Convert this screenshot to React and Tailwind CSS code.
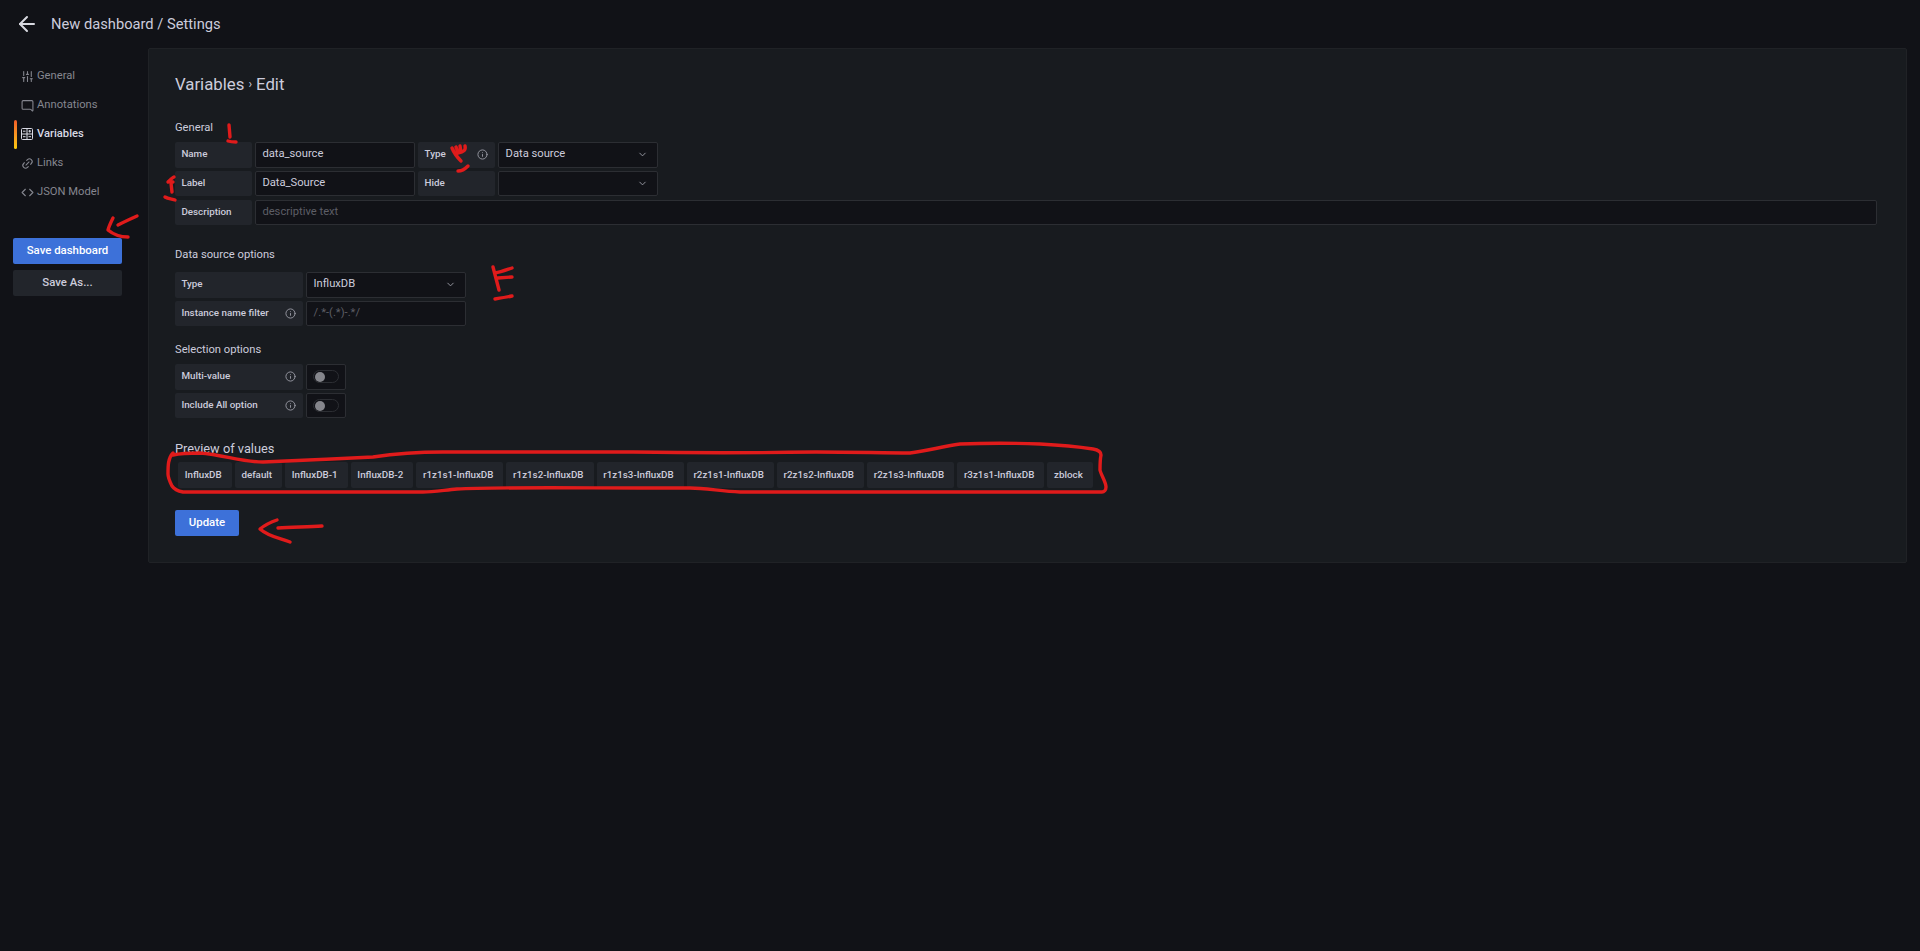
import React from "react";
import {
  ArrowLeft,
  ChevronDown,
  Code,
  Info,
  Link2,
  MessageSquare,
  SlidersVertical,
} from "lucide-react";

const CalcIcon = () => (
  <svg width="12" height="12" viewBox="0 0 12 12" fill="none" stroke="currentColor" strokeWidth="1">
    <rect x="0.5" y="0.5" width="11" height="11" rx="1" />
    <path d="M6 0.5v11M0.5 6h11M2 3.2h2.5M7.5 3.2H10M2 8.7h2.5M7.5 8.7H10M8.7 2v2.5" />
  </svg>
);

const navItems = [
  { label: "General", icon: <SlidersVertical size={13} /> },
  { label: "Annotations", icon: <MessageSquare size={13} className="-scale-x-100" /> },
  { label: "Variables", icon: <CalcIcon />, active: true },
  { label: "Links", icon: <Link2 size={13} className="-rotate-45" /> },
  { label: "JSON Model", icon: <Code size={13} /> },
];

const previewValues = [
  "InfluxDB",
  "default",
  "InfluxDB-1",
  "InfluxDB-2",
  "r1z1s1-InfluxDB",
  "r1z1s2-InfluxDB",
  "r1z1s3-InfluxDB",
  "r2z1s1-InfluxDB",
  "r2z1s2-InfluxDB",
  "r2z1s3-InfluxDB",
  "r3z1s1-InfluxDB",
  "zblock",
];

const FieldLabel = ({ width, info, children }) => (
  <div
    className={`${width} h-full shrink-0 flex items-center justify-between px-[6.4px] rounded-[2px] bg-[#22252b] text-[9.8px] font-medium text-[#ccccdc]`}
  >
    <span>{children}</span>
    {info && <Info size={11} className="mr-[1px] text-[#9b9ca6]" />}
  </div>
);

const Box = ({ width, select, muted, children }) => (
  <div
    className={`${width} h-full flex items-center justify-between px-[6.4px] rounded-[2px] border border-[#2c2e33] bg-[#111217] text-[11.2px] ${
      muted ? "text-[#5d5e66]" : "text-[#ccccdc]"
    }`}
  >
    <span>{children}</span>
    {select && <ChevronDown size={11} className="mr-[3px] text-[#9b9ca6]" />}
  </div>
);

const Toggle = () => (
  <div className="w-[40px] h-full flex items-center justify-center rounded-[2px] border border-[#2c2e33] bg-[#111217]">
    <div className="w-[26px] h-[13px] flex items-center rounded-full border border-[#2c2e33] px-[1px]">
      <div className="w-[10px] h-[10px] rounded-full bg-[#85868c]" />
    </div>
  </div>
);

const Row = ({ children }) => (
  <div className="h-[25.6px] flex gap-[3.2px] mb-[3.2px]">{children}</div>
);

// red marker scribbles drawn on top of the screenshot
const Annotations = () => (
  <svg
    className="absolute top-0 left-0 pointer-events-none"
    width="1920"
    height="951"
    fill="none"
    stroke="#e01b1b"
    strokeWidth="3.4"
    strokeLinecap="round"
    strokeLinejoin="round"
  >
    <path d="M229 125l1 12M228 141c3 1 5 1 8 1" />
    <path d="M168 182c2-2 4-4 6-5M171 179c-1 2 0 3 2 3M171 183l1 9M165 197c3 2 7 2 10 3" />
    <path d="M452 148c2 5 5 9 9 13M456 147l2 5M460 146l1 6M465 146c1 4-1 6-7 7M458 171c4 0 7-2 10-5" />
    <path d="M493 267l6 23M495 273c6-1 11-3 17-5M498 278l14-1M495 299c6-1 12-2 17-3" />
    <path d="M137 216c-7 3-13 6-19 9M113 218c-2 4-4 8-5 12 6 5 13 7 20 7" />
    <path d="M173 455c9-2 18-2 27-2 24 2 42 9 63 9 40-2 72-3 110-5 20-3 40-5 70-5h190c60 1 120 1 183 0 40 0 65 1 94 1 17-2 30-6 50-9 27-1 53-1 80 0 20 1 40 3 53 5 6 1 8 3 8 6-1 5-1 10-1 15 1 5 6 12 6 17 0 3-2 5-4 5H740c-20-1-35-4-50-4h-50c-60 0-150-1-183 1-12 1-24 3-34 3H183c-5-1-9-3-11-6-2-4-4-8-4-12 0-8 0-16 5-21z" />
    <path d="M322 526c-14 1-29 1-44 2M277 520c-6 2-12 5-17 9 9 8 20 9 30 13" />
  </svg>
);

const App = () => {
  return (
    <div className="relative min-h-screen bg-[#111217] font-['Roboto',sans-serif] text-[#ccccdc]">
      <header className="h-[48px] flex items-center pl-[15px] gap-[12px]">
        <ArrowLeft size={24} strokeWidth={2} className="text-[#d8d9e0]" />
        <h1 className="text-[14.7px] text-[#ccccdc]">New dashboard / Settings</h1>
      </header>

      <div className="flex pr-[13px]">
        <aside className="w-[148px] shrink-0 pt-[13.5px] pl-[13px] pr-[26px]">
          <nav>
            {navItems.map((item) => (
              <div
                key={item.label}
                className={`relative h-[29px] flex items-center gap-[3px] pl-[8px] text-[11.2px] ${
                  item.active ? "font-medium text-[#d8d9e4]" : "text-[#85868f]"
                }`}
              >
                {item.active && (
                  <div className="absolute left-[1px] top-0 w-[3px] h-full rounded-[2px] bg-gradient-to-b from-[#f05a28] to-[#fbca0a]" />
                )}
                {item.icon}
                <span className={item.active ? "ml-[1px]" : ""}>{item.label}</span>
              </div>
            ))}
          </nav>
          <button className="w-full h-[26px] mt-[31.5px] rounded-[2px] bg-[#3d71d9] text-[11.4px] font-medium text-white">
            Save dashboard
          </button>
          <button className="w-full h-[26px] mt-[6px] rounded-[2px] bg-[#22252b] text-[11.4px] font-medium text-[#ccccdc]">
            Save As...
          </button>
        </aside>

        <main className="flex-1 h-[515px] pl-[26px] pr-[29px] pt-[25px] rounded-[2px] border border-[#202226] bg-[#181b1f]">
          <h2 className="h-[20px] flex items-center text-[16.8px] leading-none text-[#ccccdc]">
            Variables <span className="mx-[4px] text-[12px]">›</span> Edit
          </h2>

          <h3 className="mt-[27px] h-[14px] mb-[7px] flex items-center text-[11.2px] text-[#ccccdc]">General</h3>
          <Row>
            <FieldLabel width="w-[76.8px]">Name</FieldLabel>
            <Box width="w-[160px]">data_source</Box>
            <FieldLabel width="w-[76.8px]" info>Type</FieldLabel>
            <Box width="w-[160px]" select>Data source</Box>
          </Row>
          <Row>
            <FieldLabel width="w-[76.8px]">Label</FieldLabel>
            <Box width="w-[160px]">Data_Source</Box>
            <FieldLabel width="w-[76.8px]">Hide</FieldLabel>
            <Box width="w-[160px]" select />
          </Row>
          <Row>
            <FieldLabel width="w-[76.8px]">Description</FieldLabel>
            <Box width="flex-1" muted>descriptive text</Box>
          </Row>

          <h3 className="mt-[22.8px] h-[14px] mb-[10px] flex items-center text-[11.2px] text-[#ccccdc]">Data source options</h3>
          <Row>
            <FieldLabel width="w-[128px]">Type</FieldLabel>
            <Box width="w-[160px]" select>InfluxDB</Box>
          </Row>
          <Row>
            <FieldLabel width="w-[128px]" info>Instance name filter</FieldLabel>
            <Box width="w-[160px]" muted>/.*-(.*)-.*/</Box>
          </Row>

          <h3 className="mt-[16.6px] h-[14px] mb-[7px] flex items-center text-[11.2px] text-[#ccccdc]">Selection options</h3>
          <Row>
            <FieldLabel width="w-[128px]" info>Multi-value</FieldLabel>
            <Toggle />
          </Row>
          <Row>
            <FieldLabel width="w-[128px]" info>Include All option</FieldLabel>
            <Toggle />
          </Row>

          <h3 className="mt-[23.6px] h-[14px] mb-[6px] flex items-center text-[12.8px] text-[#ccccdc]">Preview of values</h3>
          <div className="flex gap-[3px] pl-[3px]">
            {previewValues.map((value) => (
              <div
                key={value}
                className="h-[26px] flex items-center pl-[6.7px] pr-[10px] rounded-[2px] bg-[#22252b] text-[9.8px] font-medium text-[#ccccdc]"
              >
                {value}
              </div>
            ))}
          </div>

          <button className="block w-[64px] h-[26px] mt-[22px] rounded-[2px] bg-[#3d71d9] text-[11.4px] font-medium text-white">
            Update
          </button>
        </main>
      </div>

      <Annotations />
    </div>
  );
};

export default App;
